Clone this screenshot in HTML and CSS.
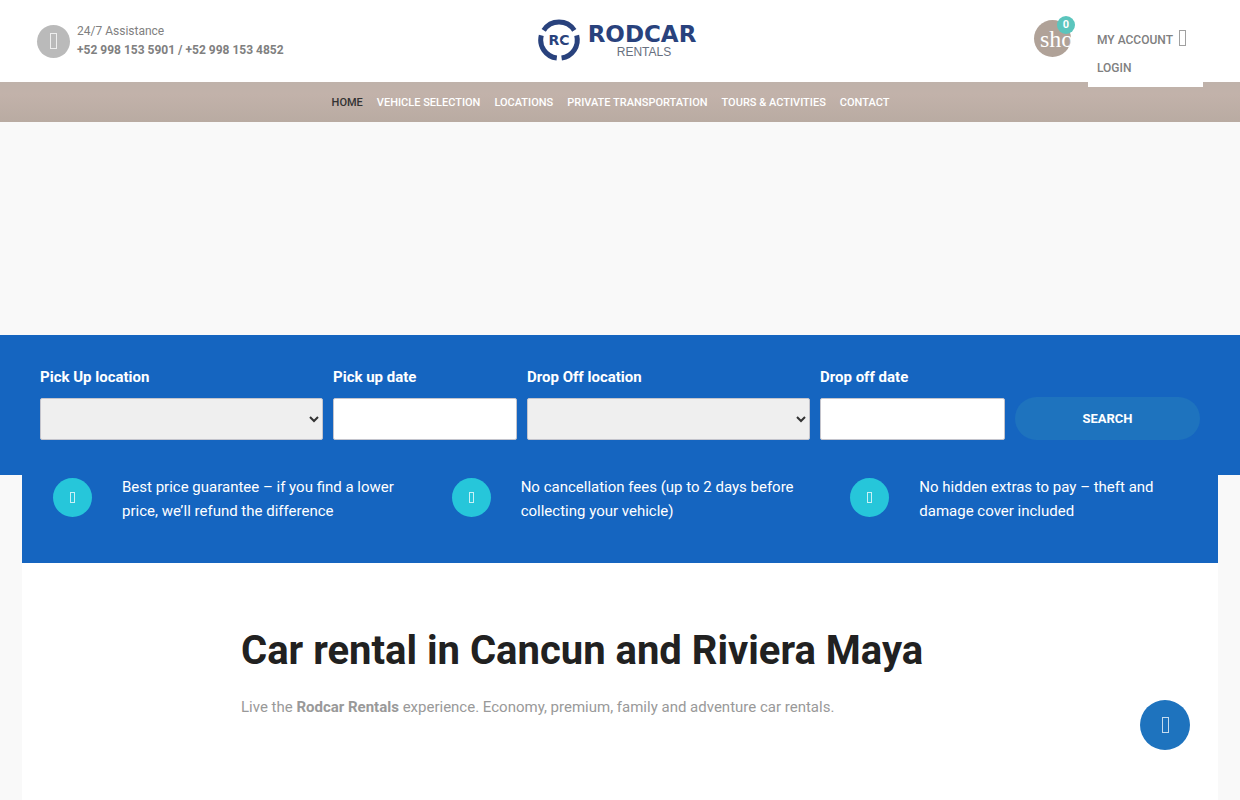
FILE: index.html
```
<!DOCTYPE html>
<html lang="en">
<head>
<meta charset="utf-8">
<meta name="viewport" content="width=device-width, initial-scale=1">
<title>Rodcar Rentals</title>
<link rel="stylesheet" href="styles.css">
</head>
<body>
<header class="header">
  <div class="assist">
    <span class="assist-icon"><span class="glyph"></span></span>
    <div class="assist-text">
      <div>24/7 Assistance</div>
      <div class="assist-phone">+52 998 153 5901 / +52 998 153 4852</div>
    </div>
  </div>
  <a class="logo" href="#" aria-label="Rodcar Rentals">
    <svg width="166" height="46" viewBox="0 0 166 46">
      <g fill="none" stroke="#29427d" stroke-width="5">
        <path d="M6.7 12.4A18.2 18.2 0 0 1 37.3 12.4"/>
        <path d="M4.3 17.4A18.2 18.2 0 0 0 19.8 40"/>
        <path d="M39.7 17.4A18.2 18.2 0 0 1 24.6 40"/>
      </g>
      <text class="logo-mark" x="22" y="27" text-anchor="middle">RC</text>
      <path d="M25 22.3h10" stroke="#fff" stroke-width="1.2"/>
      <text class="logo-name" x="105" y="24" text-anchor="middle">RODCAR</text>
      <text class="logo-sub" x="107" y="38" text-anchor="middle">RENTALS</text>
    </svg>
  </a>
  <div class="tools">
    <a class="cart" href="#"><span class="cart-icon">shopping_cart</span><span class="badge">0</span></a>
    <nav class="account" aria-label="Account">
      <a class="account-link" href="#">MY ACCOUNT <span class="glyph"></span></a>
      <a class="account-link" href="#">LOGIN</a>
    </nav>
  </div>
</header>
<nav class="nav" aria-label="Main">
  <a class="nav-link nav-current" href="#">HOME</a>
  <a class="nav-link" href="#">VEHICLE SELECTION</a>
  <a class="nav-link" href="#">LOCATIONS</a>
  <a class="nav-link" href="#">PRIVATE TRANSPORTATION</a>
  <a class="nav-link" href="#">TOURS &amp; ACTIVITIES</a>
  <a class="nav-link" href="#">CONTACT</a>
</nav>
<div class="hero"></div>
<form class="search">
  <div class="field"><label for="pl">Pick Up location</label><select id="pl" class="control select"><option></option></select></div>
  <div class="field"><label for="pd">Pick up date</label><input id="pd" class="control" type="text"></div>
  <div class="field"><label for="dl">Drop Off location</label><select id="dl" class="control select"><option></option></select></div>
  <div class="field"><label for="dd">Drop off date</label><input id="dd" class="control" type="text"></div>
  <button class="submit" type="button">SEARCH</button>
</form>
<main class="main">
  <section class="features">
    <div class="feature"><span class="feature-icon"><span class="glyph glyph-small"></span></span><p>Best price guarantee – if you find a lower price, we’ll refund the difference</p></div>
    <div class="feature"><span class="feature-icon"><span class="glyph glyph-small"></span></span><p>No cancellation fees (up to 2 days before collecting your vehicle)</p></div>
    <div class="feature"><span class="feature-icon"><span class="glyph glyph-small"></span></span><p>No hidden extras to pay – theft and damage cover included</p></div>
  </section>
  <section class="intro">
    <h1>Car rental in Cancun and Riviera Maya</h1>
    <p>Live the <strong>Rodcar Rentals</strong> experience. Economy, premium, family and adventure car rentals.</p>
  </section>
</main>
<button class="to-top" type="button" aria-label="Back to top"><span class="glyph"></span></button>
</body>
</html>
```
FILE: styles.css
```
* { box-sizing: border-box; }
body {
  margin: 0;
  min-height: 100vh;
  display: flex;
  flex-direction: column;
  background: #f9f9f9;
  font-family: Roboto, "Liberation Sans", sans-serif;
  font-size: 15px;
  line-height: 24px;
}
a { color: inherit; text-decoration: none; }
p, h1 { margin: 0; }
.glyph { display: inline-block; flex: none; width: 7px; height: 16px; border: 1px solid currentColor; opacity: 0.75; }
.glyph-small { width: 5px; height: 11px; }

.header {
  display: grid;
  grid-template-columns: 1fr auto 1fr;
  align-items: center;
  height: 82px;
  padding: 0 37px;
  background: #fff;
  color: #808080;
}
.assist { display: flex; align-items: center; gap: 7px; font-size: 12px; line-height: 19px; }
.assist-icon {
  display: flex; align-items: center; justify-content: center;
  width: 33px; height: 33px; border-radius: 50%;
  background: #bababa; color: #fff;
}
.assist-phone { font-weight: 700; }
.logo svg { display: block; }
.logo-mark { font: bold 14px "DejaVu Sans", sans-serif; fill: #29427d; }
.logo-name { font: bold 23px "DejaVu Sans", sans-serif; fill: #29427d; }
.logo-sub { font: 12px "Liberation Sans", sans-serif; fill: #687080; }
.tools { display: flex; justify-content: flex-end; align-items: flex-start; height: 62px; gap: 17px; }
.cart { position: relative; width: 37px; height: 37px; margin-top: 10px; }
.cart-icon {
  display: block; overflow: hidden; height: 37px; padding-left: 6px;
  border-radius: 50%; background: #b0a298; color: #fff;
  font: 24px/39px "Liberation Serif", serif;
}
.badge {
  position: absolute; top: -4px; right: -4px; width: 18px; height: 18px; border-radius: 50%;
  background: #5bc5bd; color: #fff; font-size: 11px; font-weight: 700; line-height: 18px; text-align: center;
}
.account {
  z-index: 1; width: 115px; padding: 16px 9px 5px; background: #fff;
  font-size: 12px; font-weight: 500; line-height: 28px;
}
.account-link { display: flex; align-items: center; gap: 6px; height: 28px; white-space: nowrap; }
.account-link .glyph { margin-bottom: 4px; }

.nav {
  display: flex; justify-content: center; gap: 14px; height: 40px; padding-right: 19px;
  background: linear-gradient(#bfb2aa, #c2b2aa 30%, #b9aba2);
  color: #fff; font-size: 11px; line-height: 41px;
}
.nav-link { font-weight: 500; white-space: nowrap; }
.nav-current { color: #333; }
.hero { height: 213px; }

.search {
  display: grid;
  grid-template-columns: 283fr 184fr 283fr 185fr 185fr;
  align-items: end;
  gap: 10px;
  padding: 30px 40px 35px;
  background: #1565c0;
  color: #fff;
}
.field { display: flex; flex-direction: column; gap: 9px; font-weight: 700; }
.control { width: 100%; height: 42px; border: 1px solid #c4c4cc; border-radius: 2px; background: #fff; font: inherit; }
.select { background: #efefef; color: #333; }
.submit {
  height: 43px; border: 0; border-radius: 22px; background: #1e73be; color: #fff;
  font: 700 13px Roboto, sans-serif;
}

.main { flex: 1; margin: 0 22px; background: #fff; }
.features { display: grid; grid-template-columns: repeat(3, 1fr); padding-bottom: 40px; background: #1565c0; color: #fff; }
.feature { display: flex; gap: 30px; padding: 0 20px 0 31px; }
.feature-icon {
  display: flex; flex: none; align-items: center; justify-content: center;
  width: 39px; height: 39px; margin-top: 3px; border-radius: 50%; background: #26c6da;
}
.intro { max-width: 758px; margin: 0 auto; padding: 63px 0 80px; color: #999; }
.intro h1 { margin-bottom: 19px; color: #212121; font-size: 40px; font-weight: 700; line-height: 50px; }
.to-top {
  position: fixed; right: 50px; bottom: 50px; display: flex; align-items: center; justify-content: center;
  width: 50px; height: 50px; border: 0; border-radius: 50%; background: #1e73be; color: #fff;
}
```
